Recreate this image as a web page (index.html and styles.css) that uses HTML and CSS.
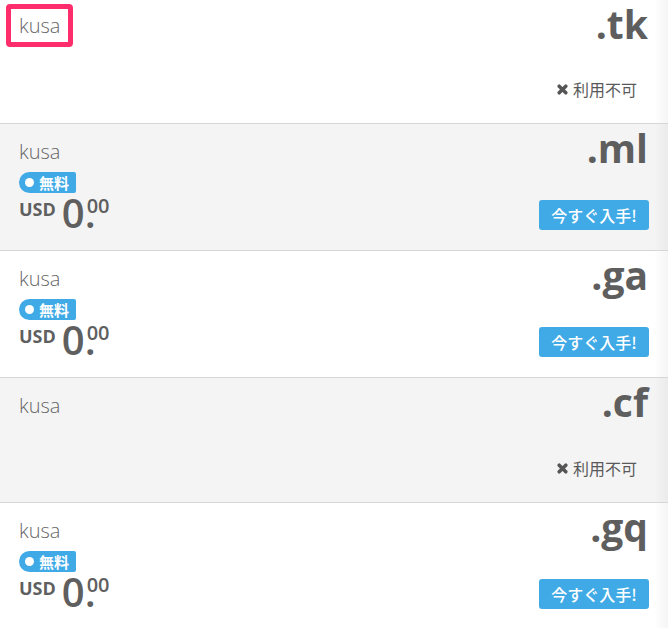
FILE: index.html
```html
<!DOCTYPE html>
<html lang="ja">
<head>
<meta charset="utf-8">
<title>Domains</title>
<link rel="stylesheet" href="styles.css">
</head>
<body>
<div class="list">
  <div class="row row-first">
    <div class="left"><div class="name">kusa</div></div>
    <div class="right">
      <div class="tld">.tk</div>
      <div class="action"><span class="na"><svg class="x" viewBox="0 0 10 10"><path d="M2 2L8 8M8 2L2 8"/></svg>利用不可</span></div>
    </div>
    <span class="highlight"></span>
  </div>
  <div class="row row-alt">
    <div class="left">
      <div class="name">kusa</div>
      <div class="badge"><span class="dot"></span>無料</div>
      <div class="price"><span class="cur">USD</span><span class="amt">0.</span><span class="cents">00</span></div>
    </div>
    <div class="right">
      <div class="tld">.ml</div>
      <div class="action"><span class="btn">今すぐ入手!</span></div>
    </div>
  </div>
  <div class="row">
    <div class="left">
      <div class="name">kusa</div>
      <div class="badge"><span class="dot"></span>無料</div>
      <div class="price"><span class="cur">USD</span><span class="amt">0.</span><span class="cents">00</span></div>
    </div>
    <div class="right">
      <div class="tld">.ga</div>
      <div class="action"><span class="btn">今すぐ入手!</span></div>
    </div>
  </div>
  <div class="row row-alt row-na">
    <div class="left"><div class="name">kusa</div></div>
    <div class="right">
      <div class="tld">.cf</div>
      <div class="action"><span class="na"><svg class="x" viewBox="0 0 10 10"><path d="M2 2L8 8M8 2L2 8"/></svg>利用不可</span></div>
    </div>
  </div>
  <div class="row">
    <div class="left">
      <div class="name">kusa</div>
      <div class="badge"><span class="dot"></span>無料</div>
      <div class="price"><span class="cur">USD</span><span class="amt">0.</span><span class="cents">00</span></div>
    </div>
    <div class="right">
      <div class="tld">.gq</div>
      <div class="action"><span class="btn">今すぐ入手!</span></div>
    </div>
  </div>
</div>
</body>
</html>
```

FILE: styles.css
```css
html, body {
  margin: 0;
  padding: 0;
  overflow: hidden;
  background: #fff;
}
body {
  font-family: "Open Sans", "Noto Sans CJK JP", sans-serif;
  color: #666;
}
.list {
  display: flex;
  flex-direction: column;
}
.row {
  position: relative;
  display: flex;
  justify-content: space-between;
  box-sizing: border-box;
  height: 127px;
  padding: 0 19px 0 19px;
  border-bottom: 1px solid #d6d6d6;
  background-color: #fff;
  background-image: linear-gradient(to right, rgba(0,0,0,0) calc(100% - 14px), rgba(0,0,0,0.04));
  flex: none;
}
.row-alt {
  background-color: #f4f4f4;
}
.row-first {
  height: 124px;
}
.row-na {
  height: 125px;
}
.left {
  display: flex;
  flex-direction: column;
  align-items: flex-start;
  padding-top: 16px;
}
.row-first .left {
  padding-top: 14px;
}
.name {
  font-size: 20px;
  line-height: 24px;
  font-weight: 300;
  color: #666;
}
.badge {
  margin-top: 8px;
  height: 21px;
  display: flex;
  align-items: center;
  padding: 0 7px 0 6px;
  background: #40aae6;
  border-radius: 11px 2px 2px 11px;
  color: #fff;
  font-family: "Noto Sans CJK JP", sans-serif;
  font-weight: 700;
  font-size: 15px;
  line-height: 21px;
}
.dot {
  width: 9px;
  height: 9px;
  border-radius: 50%;
  background: #fff;
  margin-right: 5px;
}
.price {
  display: flex;
  align-items: flex-start;
  height: 40px;
}
.cur {
  font-size: 18px;
  line-height: 18px;
  font-weight: 700;
  color: #5f5f5f;
  margin-top: 7px;
  margin-right: 6px;
}
.amt {
  font-size: 40px;
  line-height: 40px;
  font-weight: 600;
  color: #5f5f5f;
}
.cents {
  font-size: 20px;
  line-height: 20px;
  font-weight: 600;
  color: #5f5f5f;
  margin-top: 3px;
  margin-left: -9px;
}
.right {
  display: flex;
  flex-direction: column;
  align-items: flex-end;
  justify-content: space-between;
  padding-bottom: 20px;
}
.row-first .right,
.row-na .right {
  padding-bottom: 19px;
}
.tld {
  font-size: 39px;
  line-height: 48px;
  font-weight: 700;
  color: #5e5e5e;
  padding-right: 1px;
}
.action {
  height: 30px;
  display: flex;
  align-items: center;
}
.btn {
  display: flex;
  align-items: center;
  justify-content: center;
  width: 110px;
  height: 30px;
  box-sizing: border-box;
  background: #40aae6;
  border-radius: 3px;
  color: #fff;
  font-family: "Noto Sans CJK JP", sans-serif;
  font-size: 16px;
  font-weight: 500;
}
.na {
  display: flex;
  align-items: center;
  font-family: "Noto Sans CJK JP", sans-serif;
  font-size: 16px;
  color: #5a5a5a;
  padding-right: 12px;
}
.x {
  width: 11px;
  height: 11px;
  margin-right: 5px;
  fill: none;
  stroke: #555;
  stroke-width: 3.2;
  stroke-linecap: round;
}
.highlight {
  position: absolute;
  left: 6px;
  top: 4px;
  width: 67px;
  height: 43px;
  box-sizing: border-box;
  border: 5px solid #ff2d6c;
  border-radius: 4px;
}
```
